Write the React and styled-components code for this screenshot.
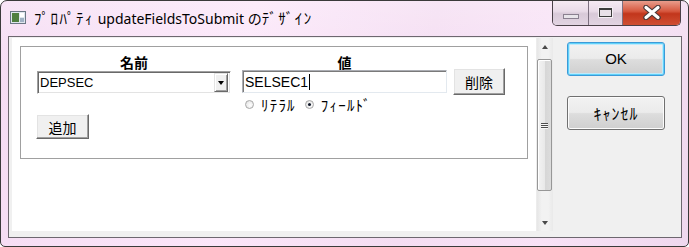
import styled, { createGlobalStyle } from "styled-components";

const GlobalStyle = createGlobalStyle`
  html, body { margin: 0; padding: 0; background: #ffffff; }
  body { font-family: "Noto Sans", "Noto Sans CJK JP", sans-serif; }
`;

const jp = `"Noto Sans CJK JP", sans-serif`;
const latin = `"Liberation Sans", "Noto Sans CJK JP", sans-serif`;

export default function App() {
  return (
    <>
      <GlobalStyle />
      <Window>
        <TitleBar>
          <AppIcon width="16" height="13" viewBox="0 0 16 13">
            <rect x="0.5" y="0.5" width="15" height="12" fill="#dfe6ee" stroke="#6b7785" />
            <rect x="2" y="2" width="7" height="9" fill="#4f7f3f" />
            <rect x="10" y="2" width="4" height="4" fill="#ffffff" />
            <rect x="10" y="7" width="4" height="4" fill="#9fb1c4" />
          </AppIcon>
          <Title>
            <Kana>ﾌﾟﾛﾊﾟﾃｨ</Kana> updateFieldsToSubmit の<Kana>ﾃﾞｻﾞｲﾝ</Kana>
          </Title>
          <Spacer />
          <Captions>
            <CaptionButton width={35}>
              <MinGlyph />
            </CaptionButton>
            <CaptionButton width={33}>
              <MaxGlyph />
            </CaptionButton>
            <CloseButton>
              <svg width="22" height="15" viewBox="0 0 22 15">
                <path d="M5 2.5 L17 12.5 M17 2.5 L5 12.5" stroke="#4a3a3a" strokeWidth="5.5" strokeLinecap="round" />
                <path d="M5 2.5 L17 12.5 M17 2.5 L5 12.5" stroke="#ffffff" strokeWidth="3.2" strokeLinecap="round" />
              </svg>
            </CloseButton>
          </Captions>
        </TitleBar>

        <Client>
          <Pane>
            <Group>
              <HeaderRow>
                <ColLabel width={194}>名前</ColLabel>
                <ColLabel width={205} gap={11}>値</ColLabel>
              </HeaderRow>
              <FieldRow>
                <Combo>
                  <ComboText>DEPSEC</ComboText>
                  <DropButton>
                    <DownTri color="#000000" />
                  </DropButton>
                </Combo>
                <ValueCol>
                  <TextBox>
                    <BoxText>SELSEC1</BoxText>
                    <Caret />
                  </TextBox>
                  <RadioRow>
                    <Radio />
                    <RadioText>ﾘﾃﾗﾙ</RadioText>
                    <Radio checked />
                    <RadioText>ﾌｨｰﾙﾄﾞ</RadioText>
                  </RadioRow>
                </ValueCol>
                <ClassicButton width={52} height={27} offset={-2} left={6}>削除</ClassicButton>
              </FieldRow>
              <ClassicButton width={53} height={25} offset={3} left={-1}>追加</ClassicButton>
            </Group>
          </Pane>

          <ScrollBar>
            <ArrowBox>
              <UpTri />
            </ArrowBox>
            <Thumb>
              <Grip />
              <Grip />
              <Grip />
            </Thumb>
            <Spacer />
            <ArrowBox>
              <DownTri color="#4a4a4a" />
            </ArrowBox>
          </ScrollBar>

          <ButtonColumn>
            <AeroButton focused>OK</AeroButton>
            <AeroButton>ｷｬﾝｾﾙ</AeroButton>
          </ButtonColumn>
        </Client>
      </Window>
    </>
  );
}

const Window = styled.div`
  width: 689px;
  height: 247px;
  box-sizing: border-box;
  border: 1px solid #3a3a3a;
  border-radius: 7px 7px 5px 5px;
  background:
    linear-gradient(180deg, rgba(255, 255, 255, 0.25) 0%, rgba(255, 255, 255, 0) 30%),
    linear-gradient(100deg, #f5dcf3 0%, #fbe6f9 35%, #f4ddf2 60%, #f8e2f6 80%, #efd8ee 100%);
  display: flex;
  flex-direction: column;
  overflow: hidden;
`;

const TitleBar = styled.div`
  height: 35px;
  flex: none;
  display: flex;
  align-items: flex-start;
  padding-left: 9px;
`;

const AppIcon = styled.svg`
  margin-top: 10px;
  flex: none;
`;

const Title = styled.div`
  margin-left: 8px;
  margin-top: 7px;
  font-family: "Noto Sans", "Noto Sans CJK JP", sans-serif;
  font-size: 14px;
  line-height: 20px;
  color: #000000;
  white-space: nowrap;
`;

const Kana = styled.span`
  font-family: ${jp};
  font-size: 15px;
  letter-spacing: 1.5px;
`;

const Spacer = styled.div`
  flex: 1;
`;

const Captions = styled.div`
  display: flex;
  margin-top: -1px;
  margin-right: 7px;
  height: 25px;
  border: 1px solid #4a4148;
  border-top: none;
  border-radius: 0 0 5px 5px;
  overflow: hidden;
`;

const CaptionButton = styled.div`
  width: ${(p) => p.width}px;
  display: flex;
  align-items: center;
  justify-content: center;
  background: linear-gradient(180deg, #f6ebf4 0%, #e9dbe8 45%, #d8c9d8 55%, #e2d4e2 100%);
  border-right: 1px solid #7d7080;
  box-shadow: inset 0 1px 0 rgba(255, 255, 255, 0.7);
`;

const MinGlyph = styled.div`
  width: 14px;
  height: 3px;
  margin-top: 8px;
  border: 1px solid #8a8090;
  background: #e8e4ea;
`;

const MaxGlyph = styled.div`
  width: 11px;
  height: 6px;
  border: 1px solid #3c3c3c;
  border-top-width: 2px;
  background: #e8e0e8;
  box-shadow: 0 0 0 1px #f4eef4;
`;

const CloseButton = styled.div`
  width: 57px;
  display: flex;
  align-items: center;
  justify-content: center;
  background: linear-gradient(180deg, #eaa393 0%, #d6583f 45%, #c2361c 55%, #cf4f33 100%);
  box-shadow: inset 0 1px 0 rgba(255, 255, 255, 0.5);
`;

const Client = styled.div`
  flex: 1;
  margin: 0 6px 8px 7px;
  border: 1px solid #6d676f;
  background: #f0f0f0;
  display: flex;
  padding: 1px 0 6px 3px;
`;

const Pane = styled.div`
  width: 524px;
  box-sizing: border-box;
  background: #ffffff;
  padding: 8px;
`;

const Group = styled.div`
  width: 508px;
  height: 113px;
  box-sizing: border-box;
  border: 1px solid #a0a0a0;
  padding: 8px 0 0 16px;
  display: flex;
  flex-direction: column;
  align-items: flex-start;
`;

const HeaderRow = styled.div`
  display: flex;
`;

const ColLabel = styled.div`
  width: ${(p) => p.width}px;
  margin-left: ${(p) => p.gap || 0}px;
  text-align: center;
  font-family: ${jp};
  font-size: 14px;
  font-weight: 700;
  line-height: 15px;
  color: #000000;
`;

const FieldRow = styled.div`
  display: flex;
  align-items: flex-start;
`;

const sunken = `
  box-sizing: border-box;
  height: 23px;
  background: #ffffff;
  border: 1px solid;
  border-color: #a0a0a0 #ffffff #ffffff #a0a0a0;
  box-shadow: inset 1px 1px 0 #696969, inset -1px -1px 0 #e3e3e3;
  display: flex;
  align-items: center;
`;

const Combo = styled.div`
  ${sunken}
  width: 194px;
  margin-top: 1px;
  padding: 2px;
`;

const ComboText = styled.span`
  flex: 1;
  font-family: ${latin};
  font-size: 13px;
  color: #000000;
`;

const DropButton = styled.div`
  width: 14px;
  height: 19px;
  box-sizing: border-box;
  background: #f0f0f0;
  border: 1px solid;
  border-color: #e3e3e3 #696969 #696969 #e3e3e3;
  box-shadow: inset 1px 1px 0 #ffffff, inset -1px -1px 0 #a0a0a0;
  display: flex;
  align-items: center;
  justify-content: center;
`;

const DownTri = styled.div`
  width: 0;
  height: 0;
  border-left: 3.5px solid transparent;
  border-right: 3.5px solid transparent;
  border-top: 4px solid ${(p) => p.color};
`;

const UpTri = styled.div`
  width: 0;
  height: 0;
  border-left: 3.5px solid transparent;
  border-right: 3.5px solid transparent;
  border-bottom: 4px solid #4a4a4a;
`;

const ValueCol = styled.div`
  margin-left: 11px;
  width: 205px;
  display: flex;
  flex-direction: column;
`;

const TextBox = styled.div`
  ${sunken}
  width: 205px;
  padding-left: 2px;
  border-color: #abadb3 #e3e9ef #e3e9ef #abadb3;
  box-shadow: inset 1px 1px 0 #7a7a7a;
`;

const BoxText = styled.span`
  font-family: ${latin};
  font-size: 14px;
  color: #000000;
`;

const Caret = styled.span`
  width: 1px;
  height: 16px;
  margin-left: 1px;
  background: #000000;
`;

const RadioRow = styled.div`
  display: flex;
  align-items: center;
  margin-top: 5px;
  padding-left: 3px;
  height: 13px;
`;

const Radio = styled.span`
  position: relative;
  width: 9px;
  height: 9px;
  box-sizing: border-box;
  border-radius: 50%;
  border: 1px solid #a8a8a8;
  background: radial-gradient(circle at 60% 60%, #ffffff 0%, #dedede 100%);
  margin-right: 7px;

  &::after {
    content: "";
    display: ${(p) => (p.checked ? "block" : "none")};
    position: absolute;
    left: 2px;
    top: 2px;
    width: 3px;
    height: 3px;
    border-radius: 50%;
    background: #101828;
  }
`;

const RadioText = styled.span`
  font-family: ${jp};
  font-size: 15px;
  letter-spacing: 1.2px;
  line-height: 13px;
  color: #000000;
  margin-right: 9px;
`;

const ClassicButton = styled.div`
  width: ${(p) => p.width}px;
  height: ${(p) => p.height}px;
  margin-top: ${(p) => p.offset}px;
  margin-left: ${(p) => p.left}px;
  box-sizing: border-box;
  background: #f0f0f0;
  border: 1px solid;
  border-color: #ffffff #696969 #696969 #ffffff;
  box-shadow: inset -1px -1px 0 #a0a0a0, inset 1px 1px 0 #e3e3e3;
  display: flex;
  align-items: center;
  justify-content: center;
  font-family: ${jp};
  font-size: 14px;
  color: #000000;
`;

const ScrollBar = styled.div`
  width: 17px;
  flex: none;
  display: flex;
  flex-direction: column;
  background: linear-gradient(90deg, #e6e6e6 0%, #f2f2f2 30%, #f2f2f2 70%, #e9e9e9 100%);
  border-left: 1px solid #ececec;
  box-sizing: border-box;
`;

const ArrowBox = styled.div`
  height: 17px;
  display: flex;
  align-items: center;
  justify-content: center;
`;

const Thumb = styled.div`
  margin: 4px 1px 0 0;
  height: 132px;
  box-sizing: border-box;
  border: 1px solid #979797;
  border-radius: 2px;
  background: linear-gradient(90deg, #f3f3f3 0%, #e9e9e9 50%, #d6d6d6 51%, #dcdcdc 100%);
  box-shadow: inset 1px 1px 0 #ffffff;
  display: flex;
  flex-direction: column;
  align-items: center;
  justify-content: center;
  gap: 1px;
`;

const Grip = styled.div`
  width: 7px;
  height: 1px;
  background: #4e4e4e;
  box-shadow: 0 1px 0 #f8f8f8;
`;

const ButtonColumn = styled.div`
  margin-left: 14px;
  padding-top: 4px;
  display: flex;
  flex-direction: column;
  gap: 20px;
`;

const AeroButton = styled.div`
  width: 98px;
  height: 34px;
  box-sizing: border-box;
  border: 1px solid ${(p) => (p.focused ? "#3c9ad8" : "#707070")};
  border-radius: 3px;
  background: linear-gradient(180deg, #f2f2f2 0%, #ebebeb 48%, #dddddd 52%, #cfcfcf 100%);
  box-shadow: ${(p) =>
    p.focused
      ? "inset 0 0 0 1px #5fd1f9, inset 0 0 0 2px #bfe9fb"
      : "inset 0 0 0 1px #fcfcfc"};
  display: flex;
  align-items: center;
  justify-content: center;
  padding-bottom: 1px;
  font-family: ${(p) => (p.focused ? latin : jp)};
  font-size: ${(p) => (p.focused ? "15px" : "16px")};
  letter-spacing: ${(p) => (p.focused ? "0" : "1px")};
  color: #000000;
`;
